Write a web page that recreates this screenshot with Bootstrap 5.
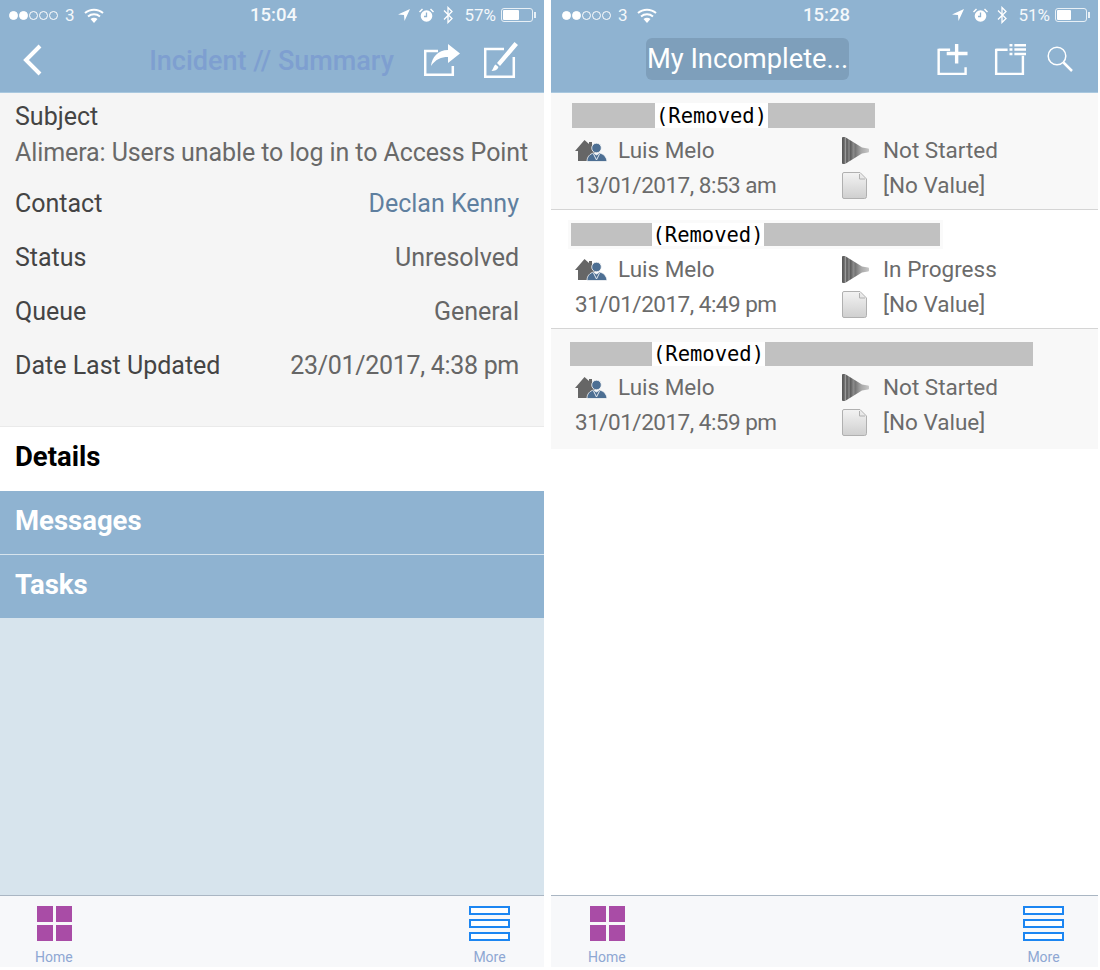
<!DOCTYPE html>
<html lang="en">
<head>
    <meta charset="UTF-8">
    <meta name="viewport" content="width=device-width, initial-scale=1.0">
    <title>Incidents</title>
    <link href="https://cdn.jsdelivr.net/npm/bootstrap@5.3.3/dist/css/bootstrap.min.css" rel="stylesheet">
    <style>
        html, body { background: #fff; }
        body { font-family: Roboto, "Liberation Sans", sans-serif; color: #444; }
        .screens { width: 1100px; height: 967px; }
        .phone { height: 967px; }
        .phone-left { width: 544px; margin-right: 7px; background: #d7e4ed; }
        .phone-right { width: 547px; background: #fff; }
        .app-head { height: 93px; background: #8fb3d1; border-bottom: 1px solid #a9c8df; color: #fff; flex: none; }
        .status-line { height: 30px; font-size: 17px; line-height: 22px; color: #f4f8fb; }
        .status-left { padding-left: 9px; width: 250px; gap: 7px; }
        .phone-right .status-left { padding-left: 11px; width: 252px; }
        .status-time { font-size: 18.500px; font-weight: 500; width: 48px; }
        .status-right { margin-left: auto; padding-right: 11px; gap: 9px; }
        .status-pct { margin-left: 2px; }
        .wifi-icon { margin-left: 2px; }
        .dots { gap: 1px; }
        .sig { width: 9px; height: 9px; border-radius: 50%; border: 1px solid #fff; }
        .sig-on { background: #fff; }
        .battery { width: 32px; height: 14px; margin-left: -4px; border: 1px solid #e8f0f6; border-radius: 3px; padding: 1px; position: relative; }
        .battery-fill { height: 100%; background: #fff; border-radius: 1px; }
        .battery::after { content: ""; position: absolute; right: -4px; top: 3px; width: 2px; height: 6px; background: #e8f0f6; }
        .nav-line { height: 62px; padding-bottom: 3px; }
        .phone-right .nav-line { padding-bottom: 4px; }
        .back-icon { margin-left: 22px; }
        .title-left { margin: 3px 0 0 107px; width: 245px; font-size: 27px; font-weight: 500; color: #7e9fd0; white-space: nowrap; line-height: 32px; text-align: center; }
        .share-icon { margin-left: 30px; }
        .edit-icon { margin-left: 24px; }
        .title-right { margin-left: 95px; background: #7e9fbb; border-radius: 6px; width: 203px; height: 42px; font-size: 27.300px; line-height: 43px; text-align: center; white-space: nowrap; }
        .plus-icon { margin-left: 88px; }
        .list-icon { margin-left: 25px; }
        .find-icon { margin-left: 20px; }

        .summary { background: #f5f5f5; height: 333px; padding: 8px 15px 0; font-size: 25px; line-height: 32px; flex: none; }
        .subject-value { color: #696969; white-space: nowrap; margin-top: 4px; letter-spacing: -.09px; }
        .sum-row { margin-right: 10px; margin-top: 22px; }
        .sum-first { margin-top: 19px; }
        .sum-row > span:last-child { color: #666; }
        .sum-row a { color: #5f7f9f; text-decoration: none; }
        .sum-date { letter-spacing: -.3px; }
        .sec-tab { height: 64px; padding-left: 15px; font-size: 27.500px; font-weight: 700; line-height: 59px; flex: none; }
        .sec-open { height: 65px; background: #fff; color: #000; border-top: 1px solid #eaeaea; }
        .sec-shut { background: #8fb3d1; color: #fff; border-bottom: 1px solid #d7e4ed; }

        .tabbar { height: 72px; background: #f7f8fa; border-top: 1px solid #aab6c3; margin-top: auto; flex: none; padding: 10px 36px 0; }
        .tab-item { font-size: 14px; line-height: 17px; color: #8ea7d3; text-align: center; }
        .tab-grid { display: grid; grid-template-columns: 16px 16px; grid-auto-rows: 16px; gap: 3px; width: 35px; margin: 0 0 8px 2px; }
        .tab-grid i { background: #a94ca6; display: block; }
        .tab-lines { display: grid; gap: 4px; width: 41px; margin: 0 auto 8px; }
        .tab-lines i { height: 9px; border: 2px solid #1c86f2; background: #fff; display: block; }
        .tab-left { margin-left: -1px; }
        .phone-right .tab-left { margin-left: 1px; }
        .tab-right { margin-left: auto; margin-right: -2px; }

        .inc-row { height: 117px; padding-top: 10px; background: #f8f8f8; border-bottom: 1px solid #d5d5d5; color: #6b6b6b; font-size: 22.500px; line-height: 35px; }
        .inc-white { background: #fff; height: 119px; padding-top: 13px; }
        .inc-last { height: 120px; padding-top: 13px; border-bottom: 0; }
        .redact { height: 25px; margin-left: 21px; font-family: "DejaVu Sans Mono", "Liberation Mono", monospace; font-size: 20.500px; line-height: 27px; color: #000; }
        .redact i { background: #c1c1c1; display: block; }
        .redact span { background: #fff; text-align: center; }
        .redact-two { height: 23px; margin-left: 20px; line-height: 25px; width: fit-content; box-shadow: 0 0 0 3px #fafafa; }
        .redact-three { height: 24px; margin-left: 19px; line-height: 24px; }
        .inc-meta { display: grid; grid-template-columns: 267px auto; margin: 5px 0 0 24px; }
        .inc-white .inc-meta { margin-top: 6px; }
        .inc-last .inc-meta { margin-top: 4px; }
        .meta-cell { gap: 11px; white-space: nowrap; }
        .meta-cell svg { flex: none; }
        .meta-icon { width: 30px; }
        .meta-date { letter-spacing: -.5px; white-space: nowrap; }
    </style>
</head>
<body class="m-0">
    <svg width="0" height="0" class="position-absolute">
        <defs>
            <linearGradient id="pageFill" x1="0" y1="0" x2="0" y2="1">
                <stop offset="0" stop-color="#f3f3f3"/>
                <stop offset="1" stop-color="#cfcfcf"/>
            </linearGradient>
            <linearGradient id="funnelFill" x1="0" y1="0" x2="1" y2="0">
                <stop offset="0" stop-color="#555"/>
                <stop offset=".08" stop-color="#666"/>
                <stop offset=".13" stop-color="#999"/>
                <stop offset=".18" stop-color="#555"/>
                <stop offset=".26" stop-color="#8a8a8a"/>
                <stop offset=".32" stop-color="#5c5c5c"/>
                <stop offset=".42" stop-color="#8a8a8a"/>
                <stop offset=".5" stop-color="#777"/>
                <stop offset=".7" stop-color="#a5a5a5"/>
                <stop offset="1" stop-color="#c8c8c8"/>
            </linearGradient>
            <symbol id="owner" viewBox="0 0 32 22">
                <path fill="#666" d="M0 11 9.500 0l4.500 4V2h3v6l4 4-5 3v6H3V11Z"/>
                <circle cx="21.500" cy="8" r="4.800" fill="#4d6f93" stroke="#f8f8f8" stroke-width=".8"/>
                <path fill="#4d6f93" stroke="#f8f8f8" stroke-width=".8" d="M12 21.500c0-5 3-7.500 6.500-8.500l3 2 3-2c4 1 7 3.500 7.500 8.500Z"/>
                <path fill="none" stroke="#e4eaf0" stroke-width="1" d="M18.500 14l3 6 3-6"/>
            </symbol>
            <symbol id="funnel" viewBox="0 0 27 27">
                <path fill="url(#funnelFill)" d="M1 0h2L20 10.500l6 1a1 1 0 0 1 1 1v2a1 1 0 0 1-1 1l-6 1L3 27H1a1 1 0 0 1-1-1V1a1 1 0 0 1 1-1Z"/>
            </symbol>
            <symbol id="page" viewBox="0 0 25 27">
                <path fill="url(#pageFill)" stroke="#b0b0b0" d="M2 .5h16l6.500 6.500v17.500a2 2 0 0 1-2 2H2a1.500 1.500 0 0 1-1.500-1.500V2A1.500 1.500 0 0 1 2 .5Z"/>
                <path fill="#e8e8e8" stroke="#b0b0b0" d="M17.500 2v5h5.500"/>
            </symbol>
            <symbol id="wifi" viewBox="0 0 20 15">
                <path fill="none" stroke="#fff" stroke-width="2" d="M1 5c5-4.500 13-4.500 18 0M4 8.500c3.500-3 8.500-3 12 0"/>
                <path fill="#fff" d="M6.500 11c2-1.700 5-1.700 7 0L10 15Z"/>
            </symbol>
            <symbol id="arrow" viewBox="0 0 12 12">
                <path fill="#fff" d="M12 0 0 5.500l6 .5.500 6Z"/>
            </symbol>
            <symbol id="alarm" viewBox="0 0 15 15">
                <circle cx="7.500" cy="8" r="5.800" fill="#fff"/>
                <path fill="none" stroke="#8fb3d1" stroke-width="1.300" d="M7.500 4.500V8.500H5"/>
                <path fill="#fff" d="M0 3.500 3 .5l1 1-3 3ZM15 3.500l-3-3-1 1 3 3Z"/>
            </symbol>
            <symbol id="bt" viewBox="0 0 10 18">
                <path fill="none" stroke="#fff" stroke-width="1.300" d="M1 4.500 9 12.500 5 16.500V1.500L9 5.500 1 13.500"/>
            </symbol>
        </defs>
    </svg>

    <div class="screens d-flex">
        <div class="phone phone-left d-flex flex-column">
            <div class="app-head">
                <div class="status-line d-flex align-items-center">
                    <div class="status-left d-flex align-items-center">
                        <div class="dots d-flex"><span class="sig sig-on"></span><span class="sig sig-on"></span><span class="sig"></span><span class="sig"></span><span class="sig"></span></div>
                        <span>3</span>
                        <svg width="20" height="15" class="wifi-icon"><use href="#wifi"/></svg>
                    </div>
                    <span class="status-time">15:04</span>
                    <div class="status-right d-flex align-items-center">
                        <svg width="12" height="12"><use href="#arrow"/></svg>
                        <svg width="15" height="15"><use href="#alarm"/></svg>
                        <svg width="10" height="18"><use href="#bt"/></svg>
                        <span class="status-pct">57%</span>
                        <div class="battery"><div class="battery-fill" style="width:57%"></div></div>
                    </div>
                </div>
                <div class="nav-line d-flex align-items-center">
                    <svg class="back-icon" width="20" height="32" viewBox="0 0 20 32"><path fill="none" stroke="#fff" stroke-width="4" d="M18 2 4 16l14 14"/></svg>
                    <span class="title-left">Incident // Summary</span>
                    <svg class="share-icon" width="36" height="32" viewBox="0 0 36 32">
                        <path fill="none" stroke="#fff" stroke-width="2.500" d="M1.200 7H14M1.200 5.800V30.800H28.800V22"/>
                        <path fill="#fff" d="M24 0l12 9.500L24 19v-6c-7 0-12 2-17 9 1-9 7-16 17-16Z"/>
                    </svg>
                    <svg class="edit-icon" width="34" height="36" viewBox="0 0 34 36">
                        <path fill="none" stroke="#fff" stroke-width="2.500" d="M1.200 7H20M1.200 5.800V34.800H29.800V15"/>
                        <path fill="#fff" d="M30.500 0 34 3 16 24l-3-3ZM11.500 22.500l3 2.500c-1 3-4 4-7 4 2-2 2-5 4-6.500Z"/>
                    </svg>
                </div>
            </div>

            <div class="summary">
                <div>Subject</div>
                <div class="subject-value">Alimera: Users unable to log in to Access Point</div>
                <div class="sum-row sum-first d-flex justify-content-between"><span>Contact</span><span><a href="#">Declan Kenny</a></span></div>
                <div class="sum-row d-flex justify-content-between"><span>Status</span><span>Unresolved</span></div>
                <div class="sum-row d-flex justify-content-between"><span>Queue</span><span>General</span></div>
                <div class="sum-row d-flex justify-content-between"><span>Date Last Updated</span><span class="sum-date">23/01/2017, 4:38 pm</span></div>
            </div>
            <div class="sec-tab sec-open">Details</div>
            <div class="sec-tab sec-shut">Messages</div>
            <div class="sec-tab sec-shut">Tasks</div>

            <div class="tabbar d-flex">
                <div class="tab-item tab-left"><div class="tab-grid"><i></i><i></i><i></i><i></i></div>Home</div>
                <div class="tab-item tab-right"><div class="tab-lines"><i></i><i></i><i></i></div>More</div>
            </div>
        </div>

        <div class="phone phone-right d-flex flex-column">
            <div class="app-head">
                <div class="status-line d-flex align-items-center">
                    <div class="status-left d-flex align-items-center">
                        <div class="dots d-flex"><span class="sig sig-on"></span><span class="sig sig-on"></span><span class="sig"></span><span class="sig"></span><span class="sig"></span></div>
                        <span>3</span>
                        <svg width="20" height="15" class="wifi-icon"><use href="#wifi"/></svg>
                    </div>
                    <span class="status-time">15:28</span>
                    <div class="status-right d-flex align-items-center">
                        <svg width="12" height="12"><use href="#arrow"/></svg>
                        <svg width="15" height="15"><use href="#alarm"/></svg>
                        <svg width="10" height="18"><use href="#bt"/></svg>
                        <span class="status-pct">51%</span>
                        <div class="battery"><div class="battery-fill" style="width:51%"></div></div>
                    </div>
                </div>
                <div class="nav-line d-flex align-items-center">
                    <span class="title-right">My Incomplete...</span>
                    <svg class="plus-icon" width="32" height="31" viewBox="0 0 32 32">
                        <path fill="none" stroke="#fff" stroke-width="2.500" d="M1.200 6H13M1.200 4.800V30.800H29V24"/>
                        <path fill="#fff" d="M18 0h3.500v8H31v3.500h-9.500V20H18v-8.500H9.500V8H18Z"/>
                    </svg>
                    <svg class="list-icon" width="33" height="31" viewBox="0 0 32 32">
                        <path fill="none" stroke="#fff" stroke-width="2.500" d="M1.200 6H13M1.200 4.800V30.800H28.800V12"/>
                        <path fill="#fff" d="M15 0h3v2.500h-3ZM20 0h12v2.500H20ZM15 4.500h3V7h-3ZM20 4.500h12V7H20ZM15 9h3v2.500h-3ZM20 9h12v2.500H20Z"/>
                    </svg>
                    <svg class="find-icon" width="26" height="26" viewBox="0 0 26 26">
                        <circle cx="10" cy="10" r="8.800" fill="none" stroke="#fff" stroke-width="1.500"/>
                        <path stroke="#fff" stroke-width="2.500" d="M16.500 16.500 25 25"/>
                    </svg>
                </div>
            </div>

            <div class="inc-row">
                <div class="redact d-flex"><i style="width:83px"></i><span style="width:113px">(Removed)</span><i style="width:107px"></i></div>
                <div class="inc-meta">
                    <div class="meta-cell d-flex align-items-center"><svg width="32" height="22"><use href="#owner"/></svg><span>Luis Melo</span></div>
                    <div class="meta-cell d-flex align-items-center"><span class="meta-icon"><svg width="27" height="27" class="d-block"><use href="#funnel"/></svg></span><span>Not Started</span></div>
                    <div class="meta-date">13/01/2017, 8:53 am</div>
                    <div class="meta-cell d-flex align-items-center"><span class="meta-icon"><svg width="25" height="27" class="d-block"><use href="#page"/></svg></span><span>[No Value]</span></div>
                </div>
            </div>
            <div class="inc-row inc-white">
                <div class="redact redact-two d-flex"><i style="width:81px"></i><span style="width:112px">(Removed)</span><i style="width:176px"></i></div>
                <div class="inc-meta">
                    <div class="meta-cell d-flex align-items-center"><svg width="32" height="22"><use href="#owner"/></svg><span>Luis Melo</span></div>
                    <div class="meta-cell d-flex align-items-center"><span class="meta-icon"><svg width="27" height="27" class="d-block"><use href="#funnel"/></svg></span><span>In Progress</span></div>
                    <div class="meta-date">31/01/2017, 4:49 pm</div>
                    <div class="meta-cell d-flex align-items-center"><span class="meta-icon"><svg width="25" height="27" class="d-block"><use href="#page"/></svg></span><span>[No Value]</span></div>
                </div>
            </div>
            <div class="inc-row inc-last">
                <div class="redact redact-three d-flex"><i style="width:82px"></i><span style="width:113px">(Removed)</span><i style="width:268px"></i></div>
                <div class="inc-meta">
                    <div class="meta-cell d-flex align-items-center"><svg width="32" height="22"><use href="#owner"/></svg><span>Luis Melo</span></div>
                    <div class="meta-cell d-flex align-items-center"><span class="meta-icon"><svg width="27" height="27" class="d-block"><use href="#funnel"/></svg></span><span>Not Started</span></div>
                    <div class="meta-date">31/01/2017, 4:59 pm</div>
                    <div class="meta-cell d-flex align-items-center"><span class="meta-icon"><svg width="25" height="27" class="d-block"><use href="#page"/></svg></span><span>[No Value]</span></div>
                </div>
            </div>

            <div class="tabbar d-flex">
                <div class="tab-item tab-left"><div class="tab-grid"><i></i><i></i><i></i><i></i></div>Home</div>
                <div class="tab-item tab-right"><div class="tab-lines"><i></i><i></i><i></i></div>More</div>
            </div>
        </div>
    </div>
    <script src="https://cdn.jsdelivr.net/npm/bootstrap@5.3.3/dist/js/bootstrap.bundle.min.js"></script>
</body>
</html>
